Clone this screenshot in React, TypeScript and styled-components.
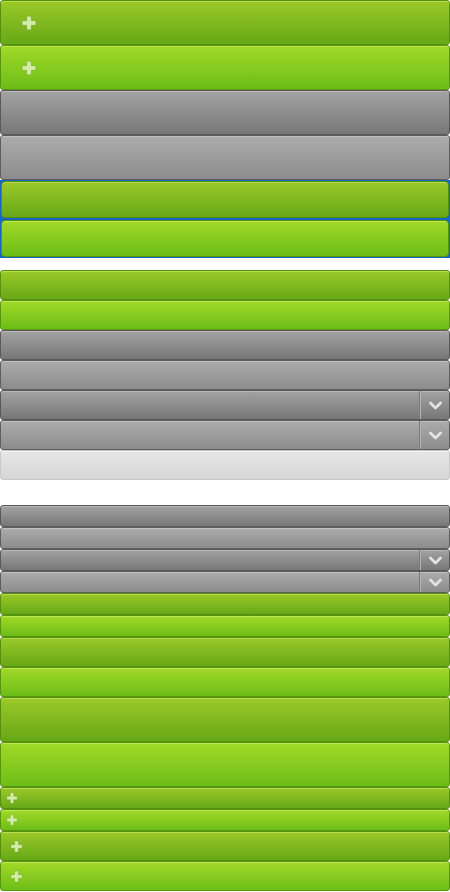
import React from "react";
import styled, { createGlobalStyle, css } from "styled-components";

const GlobalStyle = createGlobalStyle`
  html, body {
    margin: 0;
    padding: 0;
    background: #fff;
    font-family: "Liberation Sans", Arial, sans-serif;
  }
`;

type Tone = "green" | "greenLight" | "gray" | "grayLight" | "pale";

const tones: Record<Tone, ReturnType<typeof css>> = {
  green: css`
    background: linear-gradient(#9bc928, #67a817);
    border-color: #55910f;
    box-shadow: inset 0 1px 0 #b6dc52;
  `,
  greenLight: css`
    background: linear-gradient(#a2d928, #6cbd18);
    border-color: #58960f;
    box-shadow: inset 0 1px 0 #bde655;
  `,
  gray: css`
    background: linear-gradient(#a3a3a3, #777);
    border-color: #595959;
    box-shadow: inset 0 1px 0 #b8b8b8;
  `,
  grayLight: css`
    background: linear-gradient(#acacac, #8c8c8c);
    border-color: #5e5e5e;
    box-shadow: inset 0 1px 0 #c0c0c0;
  `,
  pale: css`
    background: linear-gradient(#e6e6e6, #d6d6d6);
    border-color: #c9c9c9;
    box-shadow: inset 0 1px 0 #f2f2f2;
  `,
};

const Page = styled.div`
  display: flex;
  flex-direction: column;
`;

const Group = styled.div<{ $gap?: number }>`
  display: flex;
  flex-direction: column;
  margin-bottom: ${(p) => p.$gap ?? 0}px;
`;

const Framed = styled.div`
  display: flex;
  flex-direction: column;
  gap: 2px;
  padding: 1px;
  background: #1666c2;
  margin-bottom: 12px;
`;

const Button = styled.div<{ $tone: Tone; $h: number; $round?: number }>`
  box-sizing: border-box;
  height: ${(p) => p.$h}px;
  display: flex;
  align-items: center;
  border: 1px solid;
  border-radius: ${(p) => p.$round ?? 3}px;
  position: relative;
  ${(p) => tones[p.$tone]}
`;

const PlusBox = styled.span<{ $size: number; $left: number }>`
  display: flex;
  margin-left: ${(p) => p.$left}px;
  width: ${(p) => p.$size}px;
  height: ${(p) => p.$size}px;
`;

const ChevronCell = styled.span`
  margin-left: auto;
  width: 28px;
  align-self: stretch;
  display: flex;
  align-items: center;
  justify-content: center;
  border-left: 1px solid #b4b4b4;
  box-shadow: -1px 0 0 #7a7a7a;
`;

const Plus = ({ size, left }: { size: number; left: number }) => (
  <PlusBox $size={size} $left={left}>
    <svg width={size} height={size} viewBox="0 0 14 14">
      <path
        d="M5 1h4v4h4v4H9v4H5V9H1V5h4z"
        fill="#d3ecaa"
        stroke="#6aa41c"
        strokeOpacity="0.5"
        strokeWidth="0.8"
      />
    </svg>
  </PlusBox>
);

const Chevron = () => (
  <ChevronCell>
    <svg width="13" height="9" viewBox="0 0 13 9">
      <path
        d="M1.5 2l5 5 5-5"
        fill="none"
        stroke="#e2e2e2"
        strokeWidth="2.8"
        strokeLinecap="round"
        strokeLinejoin="round"
      />
    </svg>
  </ChevronCell>
);

const App = () => (
  <Page>
    <GlobalStyle />
    <Group>
      <Button $tone="green" $h={45}>
        <Plus size={16} left={20} />
      </Button>
      <Button $tone="greenLight" $h={45}>
        <Plus size={16} left={20} />
      </Button>
      <Button $tone="gray" $h={45} />
      <Button $tone="grayLight" $h={45} />
    </Group>
    <Framed>
      <Button $tone="green" $h={37} $round={4} />
      <Button $tone="greenLight" $h={37} $round={4} />
    </Framed>
    <Group $gap={25}>
      <Button $tone="green" $h={30} />
      <Button $tone="greenLight" $h={30} />
      <Button $tone="gray" $h={30} />
      <Button $tone="grayLight" $h={30} />
      <Button $tone="gray" $h={30}>
        <Chevron />
      </Button>
      <Button $tone="grayLight" $h={30}>
        <Chevron />
      </Button>
      <Button $tone="pale" $h={30} />
    </Group>
    <Group>
      <Button $tone="gray" $h={22} />
      <Button $tone="grayLight" $h={22} />
      <Button $tone="gray" $h={22}>
        <Chevron />
      </Button>
      <Button $tone="grayLight" $h={22}>
        <Chevron />
      </Button>
      <Button $tone="green" $h={22} />
      <Button $tone="greenLight" $h={22} />
      <Button $tone="green" $h={30} />
      <Button $tone="greenLight" $h={30} />
      <Button $tone="green" $h={45} />
      <Button $tone="greenLight" $h={45} />
      <Button $tone="green" $h={22}>
        <Plus size={12} left={5} />
      </Button>
      <Button $tone="greenLight" $h={22}>
        <Plus size={12} left={5} />
      </Button>
      <Button $tone="green" $h={30}>
        <Plus size={13} left={9} />
      </Button>
      <Button $tone="greenLight" $h={30}>
        <Plus size={13} left={9} />
      </Button>
    </Group>
  </Page>
);

export default App;
